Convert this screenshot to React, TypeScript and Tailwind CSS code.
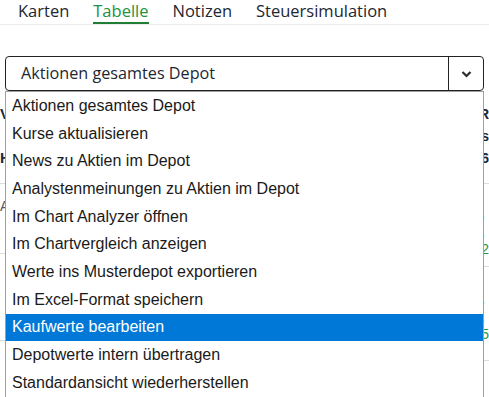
import React from "react";

const items = [
  "Aktionen gesamtes Depot",
  "Kurse aktualisieren",
  "News zu Aktien im Depot",
  "Analystenmeinungen zu Aktien im Depot",
  "Im Chart Analyzer öffnen",
  "Im Chartvergleich anzeigen",
  "Werte ins Musterdepot exportieren",
  "Im Excel-Format speichern",
  "Kaufwerte bearbeiten",
  "Depotwerte intern übertragen",
  "Standardansicht wiederherstellen",
];

export default function App() {
  return (
    <div className="relative w-[489px] h-[397px] overflow-hidden bg-white" style={{ fontFamily: '"Open Sans", sans-serif' }}>
      {/* Tabs */}
      <div className="flex h-[25px] border-b border-[#ececec] pl-[18px] text-[16.5px] text-[#1d2733] leading-[21px] gap-[24px]">
        <div>Karten</div>
        <div className="text-[#23913f] border-b-2 border-[#1f7d35] h-[24px]">Tabelle</div>
        <div>Notizen</div>
        <div>Steuersimulation</div>
      </div>

      {/* Select */}
      <div className="mt-[31px] ml-[5px] w-[479px] h-[35px] border border-[#222] rounded-[4px] flex items-stretch">
        <div className="flex-1 pl-[15px] flex items-center text-[16.2px] text-[#1d2733]">Aktionen gesamtes Depot</div>
        <div className="w-[35px] border-l border-[#222] flex items-center justify-center">
          <svg width="11" height="8" viewBox="0 0 11 8">
            <path d="M1.5 2 L5.5 6 L9.5 2" fill="none" stroke="#2a2a2a" strokeWidth="2.2" />
          </svg>
        </div>
      </div>

      {/* Background table fragments */}
      <div className="flex justify-between text-[15px] font-bold text-[#1d2733]" style={{ fontFamily: '"Liberation Sans", sans-serif' }}>
        <div className="w-[8px] overflow-hidden border-b border-[#dcdcdc]">
          <div className="h-[12px]" />
          <div className="h-[22px] leading-[22px]">V</div>
          <div className="h-[22px]" />
          <div className="h-[22px] leading-[22px]">H</div>
          <div className="h-[14px]" />
        </div>
        <div className="w-[6px] flex flex-col items-end overflow-hidden border-b border-[#dcdcdc] pt-[12px] text-[14px]">
          <div className="h-[22px] leading-[22px]">R</div>
          <div className="h-[22px] leading-[22px]">s</div>
          <div className="h-[22px] leading-[22px]">6</div>
          <div className="h-[14px]" />
        </div>
      </div>
      <div className="flex justify-between text-[14px]" style={{ fontFamily: '"Liberation Sans", sans-serif' }}>
        <div className="w-[8px] overflow-hidden">
          <div className="h-[70px] border-b border-[#dcdcdc] pt-[12px] text-[#555]">A</div>
          <div className="h-[87px] border-b border-[#dcdcdc]" />
        </div>
        <div className="w-[5px] overflow-hidden flex flex-col items-end">
          <div className="h-[83px] border-b border-[#dcdcdc] text-[#2a9a3a] pt-[20px] leading-[18px]">
            <div>,</div>
            <div>,</div>
            <div>2</div>
          </div>
          <div className="h-[94px] border-b border-[#dcdcdc] text-[#2a9a3a] pt-[22px] leading-[18px]">
            <div>,</div>
            <div>,</div>
            <div>5</div>
          </div>
        </div>
      </div>

      {/* Dropdown list */}
      <div
        className="absolute left-[5px] top-[91px] w-[479px] border border-[#a0a0a0] bg-white flex flex-col"
        style={{ fontFamily: '"Liberation Sans", Arial, sans-serif' }}
      >
        {items.map((t) => (
          <div
            key={t}
            className={
              t === "Kaufwerte bearbeiten"
                ? "h-[27.7px] pl-[6px] flex items-center text-[16px] bg-[#0078d7] text-white"
                : "h-[27.7px] pl-[6px] flex items-center text-[16px] text-[#1a1a1a]"
            }
          >
            {t}
          </div>
        ))}
      </div>
    </div>
  );
}
